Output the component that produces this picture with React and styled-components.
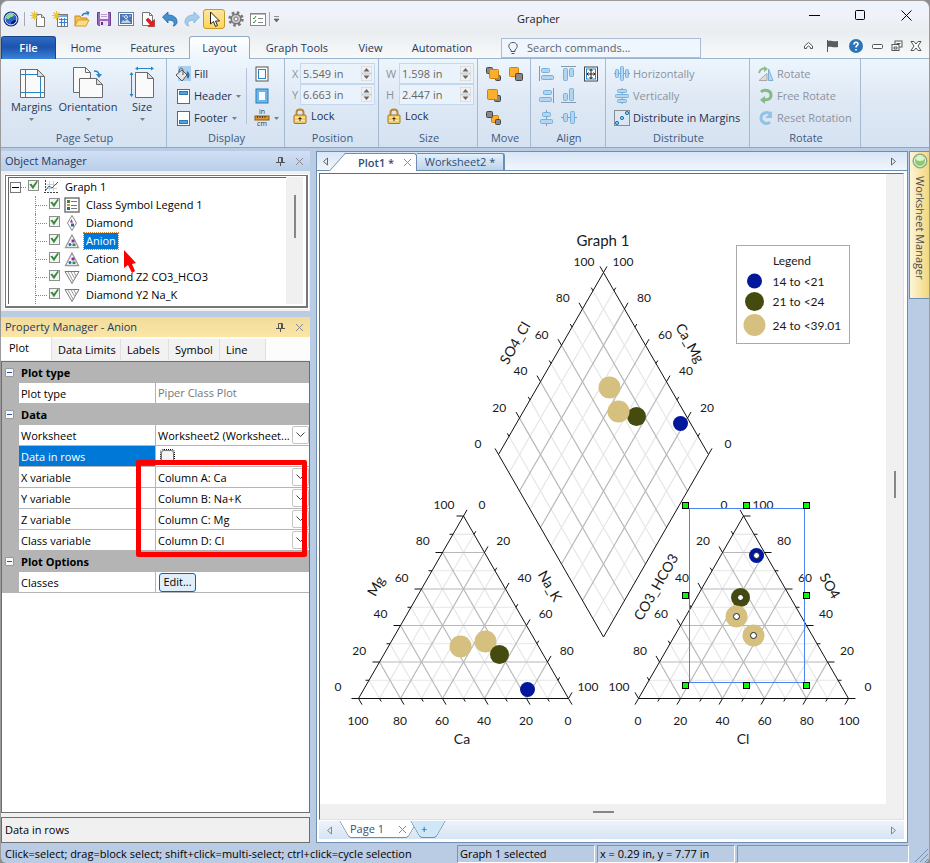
import React from "react";
import styled, { createGlobalStyle, css } from "styled-components";

const GlobalStyle = createGlobalStyle`
  *, *::before, *::after { box-sizing: border-box; }
  body { margin: 0; background: #8b8b8b; font: 11px/16px "Open Sans", "Noto Sans", sans-serif; color: #000; }
  button, input, select { font: inherit; color: inherit; margin: 0; padding: 0; border: 0; background: none; }
  svg { display: block; flex: none; }
`;

/* ---------- window frame ---------- */
const Window = styled.div`
  height: 100vh;
  min-height: 700px;
  min-width: 900px;
  display: flex;
  flex-direction: column;
  background: #bacce4;
  border: 1px solid #9b9b9b;
  border-bottom: 0;
  border-radius: 8px 8px 6px 6px;
  overflow: hidden;
`;
const Header = styled.header`
  background: linear-gradient(#eff3fb 0, #eef1f8 18px, #e9edf0 30px, #f8f9f9 57px);
`;
const TitleBar = styled.div`
  height: 35px;
  display: grid;
  grid-template-columns: auto 1fr auto;
  align-items: center;
`;
const QuickBar = styled.div`
  display: flex;
  align-items: center;
  padding: 0 6px 0 2px;
`;
const QuickButton = styled.button`
  width: 22px;
  height: 20px;
  display: grid;
  place-items: center;
  border-radius: 3px;
  border: 1px solid ${(p) => (p.$on ? "#c29b29" : "transparent")};
  background: ${(p) => (p.$on ? "linear-gradient(#fde5a0, #ffd559)" : "none")};
`;
const QuickRule = styled.span`
  width: 1px;
  height: 14px;
  margin: 0 ${(p) => p.$after}px 0 ${(p) => p.$before}px;
  background: #a5abb5;
`;
const AppTitle = styled.h1`
  margin: 0;
  font-size: 11px;
  font-weight: 400;
  text-align: center;
  color: #222;
`;
const WindowButtons = styled.div`
  display: flex;
  justify-content: flex-end;
  align-self: start;
`;
const WindowButton = styled.button`
  width: 46px;
  height: 28px;
  display: grid;
  place-items: center;
`;

/* ---------- ribbon tabs ---------- */
const TabRow = styled.nav`
  height: 23px;
  display: flex;
  align-items: stretch;
  border-bottom: 1px solid #9db4ce;
`;
const RibbonTab = styled.button`
  width: ${(p) => p.$w}px;
  height: 23px;
  color: #1e395b;
  border-radius: 3px 3px 0 0;
  border: 1px solid transparent;
  border-bottom: 0;
  ${(p) => p.$active && css`
    background: linear-gradient(#fff, #edf5fd);
    border-color: #8fa9c8;
  `}
  ${(p) => p.$file && css`
    color: #fff;
    font-weight: 600;
    border-color: #16448f;
    background: linear-gradient(#2d6cc4, #1d53ac 45%, #3b84da);
  `}
`;
const SearchBox = styled.label`
  width: 200px;
  height: 20px;
  margin: 2px 0 0 14px;
  display: flex;
  align-items: center;
  gap: 8px;
  padding-left: 5px;
  background: #eff6fd;
  border: 1px solid #a9bdd8;
  input { flex: 1; min-width: 0; outline: 0; }
  input::placeholder { color: #5d6470; opacity: 1; }
`;
const MdiButtons = styled.div`
  margin-left: auto;
  display: flex;
  align-items: center;
  padding: 0 3px 3px 0;
`;
const MdiButton = styled.button`
  width: ${(p) => p.$w || 20}px;
  height: 18px;
  display: grid;
  place-items: center;
`;

/* ---------- ribbon ---------- */
const Ribbon = styled.div`
  height: 89px;
  display: flex;
  background: linear-gradient(#edf5fd, #dfe9f5 45%, #d5e2f1);
  border-bottom: 1px solid #8fa6c3;
`;
const Group = styled.section`
  width: ${(p) => p.$w}px;
  flex: none;
  display: flex;
  flex-direction: column;
  justify-content: space-between;
  border-right: 1px solid #a6b9d2;
`;
const GroupBody = styled.div`
  height: 66px;
  margin-top: 4px;
  display: flex;
  padding-left: ${(p) => p.$pad || 0}px;
`;
const GroupTitle = styled.h2`
  margin: 0;
  height: 17px;
  padding-left: 2px;
  font-size: 11px;
  font-weight: 400;
  line-height: 16px;
  text-align: center;
  color: #3e5a80;
`;
const BigButton = styled.button`
  width: ${(p) => p.$w}px;
  padding-top: 3px;
  display: flex;
  flex-direction: column;
  align-items: center;
  justify-content: flex-start;
  color: #1e395b;
  span { margin: 1px 0 2px; }
`;
const Stack = styled.div`
  width: ${(p) => (p.$w ? p.$w + "px" : "auto")};
  display: flex;
  flex-direction: column;
`;
const SmallButton = styled.button`
  height: 22px;
  display: flex;
  align-items: center;
  gap: 3px;
  white-space: nowrap;
  color: ${(p) => (p.disabled ? "#8a929e" : "#1e2f50")};
`;
const IconGrid = styled.div`
  display: grid;
  grid-template-columns: repeat(${(p) => p.$cols}, 22px);
  grid-auto-rows: 22px;
`;
const IconButton = styled.button`
  display: grid;
  place-items: center;
`;
const VRule = styled.span`
  width: 1px;
  height: 56px;
  margin: 5px 7px 0 0;
  background: #b4c3d8;
`;
const SpinRow = styled.label`
  height: 21px;
  display: flex;
  align-items: center;
  color: #8a929e;
  > span { width: ${(p) => p.$lw}px; text-align: left; }
`;
const SpinField = styled.div`
  width: 75px;
  height: 21px;
  display: flex;
  align-items: center;
  padding: 0 2px;
  border: 1px solid #c4d7ec;
  background: #eaf3fc;
  input { width: 58px; color: #666; }
`;

/* ---------- workspace ---------- */
const Workspace = styled.main`
  flex: 1;
  min-height: 0;
  display: flex;
  padding-top: 3px;
`;
const Dock = styled.aside`
  width: 309px;
  flex: none;
  display: flex;
  flex-direction: column;
`;
const PaneTitle = styled.div`
  height: 20px;
  flex: none;
  display: flex;
  align-items: center;
  padding: 0 1px 0 4px;
  color: #1e395b;
  background: ${(p) => (p.$gold ? "linear-gradient(#f2dc9c, #fce6a4)" : "linear-gradient(#d0dff5, #b9cee9)")};
  h2 { margin: 0 auto 0 0; font-size: 11px; font-weight: 400; }
`;
const PaneButton = styled.button`
  width: 19px;
  height: 18px;
  display: grid;
  place-items: center;
`;
const TreePane = styled.div`
  height: 140px;
  flex: none;
  padding: 4px 2px 3px 4px;
  margin-bottom: 6px;
  background: #f0f0f0;
`;
const TreeBox = styled.div`
  position: relative;
  height: 133px;
  display: flex;
  border: 1px solid #777;
  border-width: 1px 2px 2px 1px;
  outline: 1px solid #fff;
  background: #fff;
  padding: 1px 3px 2px 2px;
`;
const TreeList = styled.ul`
  flex: 1;
  margin: 0;
  padding: 0;
  list-style: none;
  overflow: hidden;
  border-top: 1px solid #666;
  border-left: 1px solid #666;
`;
const TreeItem = styled.li`
  height: 18px;
  display: flex;
  align-items: center;
  padding-left: ${(p) => (p.$child ? 26 : 1)}px;
`;
const Elbow = styled.span`
  width: ${(p) => (p.$root ? 5 : 12)}px;
  height: 18px;
  border-left: ${(p) => (p.$root ? 0 : 1)}px dotted #888;
  background: linear-gradient(90deg, #888 1px, transparent 1px) 0 9px / 2px 1px repeat-x;
  margin-right: 2px;
`;
const Expander = styled.button`
  width: 11px;
  height: 11px;
  display: grid;
  place-items: center;
  border: 1px solid #777;
  &::after { content: ""; width: 7px; height: 1px; background: #000; }
`;
const Tick = styled.input.attrs({ type: "checkbox" })`
  appearance: none;
  width: 11px;
  height: 11px;
  flex: none;
  margin-bottom: 4px;
  border: 1px solid #8e8f8f;
  background: #f4f4f4;
  &:checked::after {
    content: "";
    display: block;
    width: 9px;
    height: 9px;
    background: #3a8a3a;
    clip-path: polygon(4% 42%, 28% 36%, 42% 58%, 85% 2%, 98% 14%, 44% 98%);
  }
`;
const TreeLabel = styled.label`
  display: flex;
  align-items: center;
  gap: 4px;
  white-space: nowrap;
  margin-left: 4px;
  span { padding: 0 2px; line-height: 16px; }
  ${(p) => p.$selected && css`
    span { background: #0078d7; color: #fff; outline: 1px dotted #d08030; }
  `}
`;
const ScrollTrack = styled.div`
  width: ${(p) => (p.$row ? "auto" : "17px")};
  height: ${(p) => (p.$row ? "15px" : "auto")};
  display: flex;
  justify-content: center;
  align-items: ${(p) => (p.$row ? "center" : "flex-start")};
  background: #f0f0f0;
`;
const ScrollThumb = styled.span`
  width: ${(p) => (p.$row ? 21 : 2)}px;
  height: ${(p) => (p.$row ? 2 : p.$len)}px;
  margin-top: ${(p) => p.$top || 0}px;
  background: #868686;
`;
const Pointer = styled.svg`
  position: absolute;
  left: 118px;
  top: 74px;
`;

const PropPane = styled.section`
  flex: 1;
  min-height: 0;
  display: flex;
  flex-direction: column;
  background: #f0f0f0;
`;
const PropTabs = styled.div`
  height: 23px;
  flex: none;
  display: flex;
  background: #fcfcfc;
`;
const PropTab = styled.button`
  width: ${(p) => p.$w}px;
  height: ${(p) => (p.$active ? 23 : 21)}px;
  margin-top: ${(p) => (p.$active ? 0 : 2)}px;
  padding-bottom: ${(p) => (p.$active ? 2 : 0)}px;
  padding-left: ${(p) => (p.$active ? 8 : 6)}px;
  text-align: left;
  background: ${(p) => (p.$active ? "#fff" : "#f2f2f2")};
  border-right: 1px solid #e0e0e0;
`;
const PropGrid = styled.div`
  flex: 1;
  min-height: 0;
  background: #fff;
  border: 1px solid #6e6e6e;
  margin-top: 1px;
`;
const Section = styled.div`
  padding-left: 17px;
  background: #b4b4b4;
`;
const SectionTitle = styled.h3`
  height: 21px;
  margin: 0 0 0 -14px;
  display: flex;
  align-items: center;
  gap: 7px;
  font-size: 11px;
  font-weight: 700;
`;
const Collapse = styled.button`
  width: 9px;
  height: 9px;
  display: grid;
  place-items: center;
  background: #f6f8fc;
  border: 1px solid #92999f;
  border-radius: 1px;
  &::after { content: ""; width: 5px; height: 1px; background: #3050a0; }
`;
const PropRow = styled.div`
  height: 21px;
  display: grid;
  grid-template-columns: 136px 1fr;
  gap: 1px;
  border-bottom: 1px solid #b4b4b4;
`;
const PropName = styled.label`
  padding: 1px 0 0 2px;
  line-height: 19px;
  background: ${(p) => (p.$selected ? "#0078d7" : "#fff")};
  color: ${(p) => (p.$selected ? "#fff" : "#000")};
`;
const PropValue = styled.div`
  min-width: 0;
  display: flex;
  align-items: center;
  padding-left: 2px;
  background: #fff;
  position: relative;
  input[type="text"] { width: 100%; color: #777; }
`;
const Select = styled.select`
  appearance: none;
  width: 100%;
  height: 20px;
  padding: 1px 12px 0 0;
  outline: 0;
  white-space: nowrap;
`;
const Chevron = styled.span`
  position: absolute;
  right: 0;
  top: 1px;
  width: 17px;
  height: 18px;
  display: grid;
  place-items: center;
  background: #fff;
  border: 1px solid #c4c4c4;
  border-radius: 2px;
  pointer-events: none;
`;
const RowTick = styled.input.attrs({ type: "checkbox" })`
  appearance: none;
  width: 13px;
  height: 13px;
  margin: 4px 0 0 3px;
  align-self: flex-start;
  border: 1px solid #777;
  border-radius: 3px;
  background: #f4f4f4;
  outline: 1px dotted #000;
`;
const EditButton = styled.button`
  width: 37px;
  height: 19px;
  margin-left: 1px;
  line-height: 16px;
  border: 1px solid #0067c0;
  border-radius: 3px;
  background: #e0eef9;
`;
const VariableRows = styled.div`
  position: relative;
  z-index: 1;
`;
const Highlight = styled.span`
  position: absolute;
  left: 117px;
  right: 2px;
  top: -7px;
  bottom: -6px;
  border: 5px solid #fe0000;
  border-radius: 2px;
  pointer-events: none;
`;
const Description = styled.div`
  height: 26px;
  flex: none;
  margin-top: 4px;
  padding: 1px 0 0 3px;
  line-height: 22px;
  font-weight: 500;
  border: 1px solid #6e6e6e;
  background: #f0f0f0;
`;

/* ---------- document area ---------- */
const Document = styled.section`
  flex: 1;
  min-width: 0;
  display: flex;
  flex-direction: column;
  margin: 0 1px 0 6px;
  border: 1px solid #6d8eb0;
  background: #fff;
`;
const DocTabs = styled.div`
  height: 19px;
  flex: none;
  display: flex;
  align-items: flex-end;
  padding-right: 6px;
  background: linear-gradient(#d9e6f5, #f0f6fd);
  border-bottom: 1px solid #6d8eb0;
`;
const ArrowButton = styled.button`
  width: 16px;
  height: 18px;
  display: grid;
  place-items: center;
  ${(p) => p.$end && "margin-left: auto;"}
`;
const DocTab = styled.button`
  position: relative;
  z-index: ${(p) => (p.$active ? 1 : 0)};
  height: ${(p) => (p.$active ? 18 : 17)}px;
  width: ${(p) => p.$w}px;
  margin: 0 0 ${(p) => (p.$active ? -1 : 0)}px ${(p) => p.$gap}px;
  padding: 0 4px 0 ${(p) => (p.$active ? 12 : 4)}px;
  display: flex;
  align-items: center;
  justify-content: ${(p) => (p.$active ? "space-between" : "center")};
  font-weight: ${(p) => (p.$active ? 600 : 500)};
  color: #2f4d75;
  border: 1px solid #6d8eb0;
  border-width: 1px ${(p) => (p.$active ? 1 : 2)}px 0 0;
  border-radius: 0 3px 0 0;
  background: ${(p) => (p.$active ? "#fff" : "linear-gradient(#e4f0fb, #bdd3ea)")};
  ${(p) => p.$active && css`
    &::before {
      content: "";
      position: absolute;
      z-index: -1;
      left: -9px;
      top: -1px;
      width: 18px;
      height: 18px;
      border: 1px solid #6d8eb0;
      border-width: 1px 0 0 1px;
      background: #fff;
      transform: skewX(-42deg);
    }
  `}
`;
const CanvasFrame = styled.div`
  flex: 1;
  min-height: 0;
  margin: 2px 3px 0 2px;
  border: 1px solid #e0e0e0;
  border-top: 1px solid #6a6a6a;
  border-left: 1px solid #6a6a6a;
  display: grid;
  grid-template-columns: 1fr 17px;
  grid-template-rows: 1fr 15px;
  background: #f0f0f0;
`;
const Canvas = styled.div`
  overflow: hidden;
  background: #fff;
`;
const PageTabs = styled.div`
  height: 18px;
  flex: none;
  display: flex;
  margin: 1px 3px 3px 2px;
  padding: 0 3px 0 2px;
  background: linear-gradient(#ecf3fb, #d7e4f2);
`;
const PageTab = styled.button`
  position: relative;
  z-index: 0;
  width: ${(p) => p.$w}px;
  height: 17px;
  margin-left: ${(p) => p.$gap}px;
  display: flex;
  align-items: center;
  justify-content: space-between;
  line-height: 14px;
  color: #35507a;
  border-bottom: 1px solid #6d8eb0;
  background: ${(p) => p.$fill};
  &::before, &::after {
    content: "";
    position: absolute;
    z-index: -1;
    top: 0;
    width: 12px;
    height: 17px;
    background: ${(p) => p.$fill};
    border-bottom: 1px solid #6d8eb0;
  }
  &::before { left: -6px; transform: skewX(30deg); border-left: 1px solid #6d8eb0; border-radius: 0 0 0 3px; }
  &::after { right: -6px; transform: skewX(-30deg); border-right: 1px solid #6d8eb0; border-radius: 0 0 3px 0; }
`;
const SideStrip = styled.aside`
  width: 20px;
  flex: none;
`;
const SideTab = styled.button`
  width: 20px;
  height: 148px;
  padding-top: 1px;
  display: flex;
  flex-direction: column;
  align-items: center;
  gap: 7px;
  border: 1px solid #6d8eb0;
  border-right: 0;
  background: linear-gradient(90deg, #fdf5d8, #f3d77e);
  color: #4d4d4d;
  span { writing-mode: vertical-rl; line-height: 14px; white-space: nowrap; }
`;

/* ---------- status bar ---------- */
const StatusBar = styled.footer`
  height: 20px;
  flex: none;
  display: flex;
  gap: 2px;
  padding: 2px 0 0 4px;
`;
const StatusText = styled.span`
  width: 450px;
  line-height: 17px;
`;
const StatusCell = styled.span`
  ${(p) => (p.$w ? `width: ${p.$w}px;` : "flex: 1;")}
  padding-left: 2px;
  line-height: 15px;
  border: 1px solid;
  border-color: #7695b6 #fff #fff #7695b6;
`;

/* ---------- small drawings ---------- */
const Ico = ({ size = 16, children, ...rest }) => (
  <svg width={size} height={size} viewBox={`0 0 ${size} ${size}`} fill="none" aria-hidden="true" {...rest}>
    {children}
  </svg>
);
const Caret = () => (
  <svg width="7" height="5" viewBox="0 0 7 5" aria-hidden="true"><path d="M1 1h5L3.500 4z" fill="#7a7f88" /></svg>
);
const Close = ({ c = "#8a8a8a" }) => (
  <Ico size={9}><path d="M1 1l7 7M8 1L1 8" stroke={c} /></Ico>
);
const Sun = () => (
  <path d="M4.500 0v9M0 4.500h9M1.500 1.500l6 6M7.500 1.500l-6 6" stroke="#f0c419" strokeWidth="1.200" />
);
const Globe = () => (
  <Ico>
    <circle cx="8" cy="8" r="7.500" fill="#0c1c80" /><circle cx="8" cy="8" r="6" fill="#2c62cc" stroke="#dce9ff" />
    <path d="M3 6c2-4 6-4 8-2-1 3-4 1-5 4-2 0-3 0-3-2z" fill="#8ee08a" /><path d="M8 13c0-3 3-4 5-4-1 3-3 4-5 4z" fill="#0a1560" />
  </Ico>
);
const NewDoc = () => (
  <Ico><path d="M6.500 3.500h5l3 3v9h-8z" fill="#fdfdfd" stroke="#777" /><path d="M11.500 3.500v3h3" stroke="#777" fill="#ddd" /><Sun /></Ico>
);
const NewSheet = () => (
  <Ico>
    <rect x="5.500" y="3.500" width="10" height="12" fill="#fff" stroke="#777" /><path d="M6 5h9" stroke="#78a9dd" strokeWidth="2" />
    <path d="M7 8.500h8M7 11.500h8M9.500 7v8M12.500 7v8" stroke="#3b83cc" strokeWidth="1.200" /><Sun />
  </Ico>
);
const OpenIcon = () => (
  <Ico>
    <path d="M1 15V5h5l1 2h6v3" fill="#f3c050" stroke="#c98a1c" /><path d="M1 15l3-6h11l-3 6z" fill="#ffdd84" stroke="#d59a2a" />
    <path d="M8 5c1-3 4-3 5-2" stroke="#2c7fc0" strokeWidth="1.500" /><path d="M12 0l3.500 1-1.500 4z" fill="#2c7fc0" />
  </Ico>
);
const SaveIcon = () => (
  <Ico>
    <path d="M1.500 1.500h13v13h-12l-1-1z" fill="#9a68c0" stroke="#6c3d95" /><rect x="4" y="1" width="8" height="7" fill="#f3eef8" />
    <path d="M5 3.500h6M5 5.500h6" stroke="#b8a0cc" /><rect x="4" y="10" width="8" height="5" fill="#e8e0f0" /><rect x="5" y="11" width="2" height="3" fill="#61318a" />
  </Ico>
);
const PictureIcon = () => (
  <Ico>
    <rect x=".5" y="1.500" width="15" height="13" fill="#fff" stroke="#6c7f9c" /><rect x="2" y="3" width="12" height="10" fill="#4a76b4" />
    <path d="M3 12l2-3 2 1 2-2 4 4z" fill="#b9d3ee" /><circle cx="8" cy="6" r="1.500" stroke="#d7e7f8" /><path d="M4 5h2M11 5h2" stroke="#b9d3ee" />
  </Ico>
);
const ExportIcon = () => (
  <Ico>
    <path d="M2.500 1.500h7l3 3v10h-10z" fill="#fdfdfd" stroke="#777" /><path d="M9.500 1.500v3h3" stroke="#777" />
    <path d="M8 7l4 4 2.500-2.500v7H8l2-2L6 9z" fill="#e02020" stroke="#a81010" strokeWidth=".6" />
  </Ico>
);
const ArrowBack = ({ flip, light }) => (
  <Ico>
    <path transform={flip ? "matrix(-1 0 0 1 16 0)" : undefined} d="M.5 6L6 1v3c6 0 9 3 9 7 0 2-2 4-4 4 2-2 2-6-5-6v3z"
      fill={light ? "#a8cdea" : "#4590cf"} stroke={light ? "#7fb0d8" : "#20659f"} strokeWidth=".8" />
  </Ico>
);
const CursorIcon = () => (
  <Ico><path d="M4.500 1v12l3-2.500 2 5 2-1-2-4.500h4z" fill="#fff" stroke="#222" /></Ico>
);
const GearIcon = () => (
  <Ico>
    <circle cx="8" cy="8" r="6.300" stroke="#777" strokeWidth="2.800" strokeDasharray="2.500 2.450" />
    <circle cx="8" cy="8" r="4.800" fill="#ccc" stroke="#777" strokeWidth="1.500" /><circle cx="8" cy="8" r="2" fill="#f2f2f2" stroke="#777" />
  </Ico>
);
const ListIcon = () => (
  <Ico>
    <rect x=".5" y="2.500" width="15" height="12" fill="#fff" stroke="#888" /><path d="M1 3.500h14" stroke="#bbb" />
    <path d="M3 7l1 1 2-3M3 11l1 1 2-3" stroke="#2c8f3c" /><path d="M8 7.500h5M8 11.500h5" stroke="#888" />
  </Ico>
);
const MarginsIcon = () => (
  <Ico size={32}>
    <path d="M4.500 3.500h17l7 7v21h-24z" fill="#fafafa" stroke="#6b6b6b" /><path d="M21.500 3.500v7h7z" fill="#ddd" stroke="#6b6b6b" />
    <path d="M9.500 4v27M5 8.500h16M24.500 11v20M5 26.500h23" stroke="#2a85c4" />
  </Ico>
);
const OrientationIcon = () => (
  <Ico size={32}>
    <path d="M1.500 1.500h12l5 5v20h-17z" fill="#fafafa" stroke="#6b6b6b" /><path d="M13.500 1.500v5h5" stroke="#6b6b6b" />
    <path d="M7.500 12.500h17l6 6v13h-23z" fill="#fafafa" stroke="#6b6b6b" /><path d="M24.500 12.500v6h6z" fill="#ddd" stroke="#6b6b6b" />
    <path d="M22 5c3 0 5 1 5 4" stroke="#2a85c4" strokeWidth="1.500" /><path d="M24 8h6l-3 4z" fill="#2a85c4" />
  </Ico>
);
const SizeIcon = () => (
  <Ico size={32}>
    <path d="M9.500 6.500h12l6 6v19h-18z" fill="#fafafa" stroke="#6b6b6b" /><path d="M21.500 6.500v6h6z" fill="#ddd" stroke="#6b6b6b" />
    <path d="M10 2.500h17M5.500 7v23" stroke="#2a85c4" />
    <path d="M12 .5L9 2.500l3 2zM25 .5l3 2-3 2zM3.500 9l2-3 2 3zM3.500 28l2 3 2-3z" fill="#2a85c4" />
  </Ico>
);
const FillIcon = () => (
  <Ico>
    <rect x="3" y="0" width="13" height="15" fill="#abcfee" /><path d="M12 5c3 2 3 5 1 8-1-2-2-4-1-8z" fill="#1f6fb4" />
    <path d="M1 9l6-5 5 5-5 6z" fill="#e6e6e6" stroke="#555" /><path d="M4 6c0-5 4-5 4-1v4" stroke="#555" />
  </Ico>
);
const BandIcon = ({ y }) => (
  <Ico>
    <rect x="2.500" y="1.500" width="12" height="14" fill="#fff" stroke="#666" /><rect x="4.500" y={y} width="8" height="3" fill="#4ba3e3" stroke="#2a7ab8" />
  </Ico>
);
const FrameIcon = ({ fill, inner }) => (
  <Ico>
    <rect x="2" y="1" width="12" height="14" fill={fill} stroke={inner ? "#555" : "#2878b8"} /><rect x="4.500" y="3.500" width="7" height="9" fill="#f7fbff" stroke={inner || "#6db4ea"} />
  </Ico>
);
const UnitsIcon = () => (
  <svg width="16" height="22" viewBox="0 0 16 22" aria-hidden="true">
    <rect x="1" y="9" width="14" height="4" fill="#d7973a" stroke="#8c5a14" /><path d="M3.500 9v2M6 9v2M8.500 9v2M11 9v2" stroke="#5d3a08" />
    <text x="8" y="7" fontSize="7" textAnchor="middle" fill="#333">in</text><text x="8" y="19" fontSize="7" textAnchor="middle" fill="#333">cm</text>
  </svg>
);
const LockIcon = () => (
  <Ico>
    <path d="M4.500 8V4.500c0-4 7-4 7 0V8" stroke="#b98a35" strokeWidth="2" /><rect x="2" y="7" width="12" height="8.500" rx="1" fill="#f2cc66" stroke="#a87520" />
    <path d="M3 9.500h10M3 12.500h10" stroke="#ffe9ad" /><path d="M8 9v4M6.500 10.500h3" stroke="#3b2a08" />
  </Ico>
);
const SpinIcon = () => (
  <svg width="11" height="15" viewBox="0 0 11 15" aria-hidden="true">
    <rect width="11" height="7" fill="#f1f1f1" stroke="#ccc" /><rect y="8" width="11" height="7" fill="#f1f1f1" stroke="#ccc" />
    <path d="M2.500 5.500h6L5.500 2zM2.500 9.500h6L5.500 13z" fill="#666" />
  </svg>
);
const MoveIcon = ({ boxes }) => (
  <Ico>
    {boxes.map(([x, y, s, gold]) => (
      <rect key={`${x}-${y}`} x={x} y={y} width={s} height={s} rx="1" fill={gold ? "#fcae2c" : "#888"} stroke={gold ? "#d07f0c" : "#444"} />
    ))}
  </Ico>
);
const MOVES = [
  [[0.5, 1.5, 6], [9.5, 9.5, 5], [3.5, 3.5, 9, 1]],
  [[1.5, 1.5, 9, 1], [7.5, 7.5, 7]],
  [[8.5, 7.5, 6], [1.5, 1.5, 10, 1]],
  [[5.5, 5.5, 7, 1], [0.5, 1.5, 6], [9.5, 9.5, 5]],
];
const BarsIcon = ({ line, bars }) => (
  <Ico>
    <path d={line} stroke="#8796a8" />
    {bars.map((b) => <rect key={b.join()} x={b[0]} y={b[1]} width={b[2]} height={b[3]} rx="1" fill="#b0d6f3" stroke="#78b0dc" />)}
  </Ico>
);
const ALIGNS = [
  { line: "M.5 0v15", bars: [[2.5, 2.5, 8, 4], [2.5, 9.5, 12, 4]] },
  { line: "M0 .5h15", bars: [[2.5, 2.5, 4, 12], [8.5, 2.5, 4, 8]] },
  null,
  { line: "M14.5 0v15", bars: [[4.5, 2.5, 8, 4], [0.5, 9.5, 12, 4]] },
  { line: "M0 14.5h15", bars: [[2.5, 5.5, 4, 7], [8.5, 0.5, 4, 12]] },
  undefined,
  { line: "M7.5 0v16", bars: [[3.5, 2.5, 8, 4], [1.5, 9.5, 12, 4]] },
  { line: "M0 7.5h16", bars: [[2.5, 3.5, 4, 8], [9.5, 1.5, 4, 12]] },
];
const CenterIcon = () => (
  <Ico>
    <rect x="1.500" y="1" width="13" height="14" fill="#fff" stroke="#444" /><rect x="3.500" y="3" width="9" height="10" stroke="#2a85c4" />
    <path d="M8 3v10M4 8h8" stroke="#222" /><path d="M6.500 5L8 3.500 9.500 5M6.500 11L8 12.500 9.500 11M5.500 6.500L4 8l1.500 1.500M10.500 6.500L12 8l-1.500 1.500" stroke="#222" />
  </Ico>
);
const MarginDistIcon = () => (
  <Ico>
    <rect x=".5" y=".5" width="15" height="15" stroke="#333" strokeDasharray="1 1" />
    <circle cx="3" cy="13" r="1.600" fill="#8fd0f5" stroke="#1c6fae" /><circle cx="8" cy="8" r="1.600" fill="#8fd0f5" stroke="#1c6fae" /><circle cx="13" cy="3" r="1.600" fill="#8fd0f5" stroke="#1c6fae" />
  </Ico>
);
const RotateIcon = () => (
  <Ico>
    <path d="M1 14.500h8v-7z" fill="#ddd" stroke="#a8a8a8" /><path d="M10.500 3v11.500H15z" fill="#b7d8f0" stroke="#7fb0d8" />
    <path d="M1 7c1-4 4-5 6-4" stroke="#8abf8d" strokeWidth="2" /><path d="M6 0l4 3-4 3z" fill="#8abf8d" />
  </Ico>
);
const FreeRotateIcon = () => (
  <Ico><path d="M3 4c3-3 10-2 10 3s-4 5-7 5" stroke="#86b98a" strokeWidth="3" /><path d="M7 8v8l-5-4z" fill="#86b98a" /></Ico>
);
const ResetIcon = () => (
  <Ico><path d="M13 4C9 1 3 3 3 8s6 7 9 4" stroke="#93c4e8" strokeWidth="3" /><path d="M14 1v7H7z" fill="#93c4e8" /></Ico>
);
const BulbIcon = () => (
  <Ico size={12}><path d="M4 8C0 4.500 2 .5 6 .5S12 4.500 8 8v1.500H4zM4.500 11.500h3" stroke="#555" /></Ico>
);
const PinIcon = () => (
  <Ico size={9}><path d="M2.500.5h4v5h-4zM0 5.500h9M4.500 6v3M5.500 1v4" stroke="#555" /></Ico>
);
const GraphTreeIcon = () => (
  <Ico><path d="M2.500 1v13M1 13.500h14" stroke="#444" strokeDasharray="2 1" /><path d="M6.500 2v10M10.500 2v10M4 5.500h10M4 9.500h10" stroke="#d0d0d0" /><path d="M3 11l3-4 3 2 6-6" stroke="#1d6ca8" /></Ico>
);
const LegendTreeIcon = () => (
  <Ico>
    <rect x="1" y="1" width="14" height="14" fill="#fff" stroke="#777" strokeWidth="1.500" /><path d="M7 4.500h6M7 8.500h6M7 11.500h6" stroke="#777" />
    <rect x="3" y="3" width="3" height="3" fill="#2c8f3c" /><rect x="3" y="7" width="3" height="2" fill="#f28a1c" /><rect x="3" y="10" width="3" height="3" fill="#1d6ca8" />
  </Ico>
);
const DiamondTreeIcon = () => (
  <Ico><path d="M8 .5L12.500 8 8 15.500 3.500 8z" fill="#fff" stroke="#888" /><path d="M6 7.500L7.500 4 9 7.500z" fill="#8c2fa0" /><rect x="7" y="8.500" width="3" height="3" fill="#1d6ca8" /></Ico>
);
const TriTreeIcon = () => (
  <Ico><path d="M8 2l6.500 12.500h-13z" fill="#fff" stroke="#999" strokeWidth="1.300" /><rect x="7.500" y="6.500" width="3" height="3" fill="#8c2fa0" /><circle cx="6" cy="11.500" r="1.500" fill="#1d6ca8" /><rect x="8.500" y="10.500" width="3" height="2.500" fill="#2c8f3c" /></Ico>
);
const DownTreeIcon = () => (
  <Ico><path d="M1 2.500h14L8 14.500z" fill="#fff" stroke="#777" /><path d="M4 3l5 9M7 3l3.500 6M10 3l2 4" stroke="#999" /></Ico>
);

/* ---------- Piper chart ---------- */
const ChartSvg = styled.svg`
  font-family: Lato, "Open Sans", sans-serif;
  font-size: 12px;
  fill: #1a1a1a;
  .title { font-size: 15px; }
  .axis { font-size: 14px; }
`;
const mix = (a, b, t) => [a[0] + (b[0] - a[0]) * t, a[1] + (b[1] - a[1]) * t];
const INK = "#111";
const CLASS = {
  low: { r: 7.5, fill: "#02189c" },
  mid: { r: 9.5, fill: "#454b0e" },
  high: { r: 11, fill: "#d6c080" },
};
const DIAMOND = { t: [603.5, 272.5], l: [498.5, 454.5], r: [708.5, 454.5], b: [603.5, 637] };
const CATION = { t: [463.5, 516], l: [358.5, 698.5], r: [568.5, 698.5] };
const ANION = { t: [743.5, 516], l: [638.5, 698.5], r: [848.5, 698.5] };
const UP_LEFT = [-0.5, -0.87];
const UP_RIGHT = [0.5, -0.87];
const DOWN_LEFT = [-0.5, 0.87];
const DOWN_RIGHT = [0.5, 0.87];

function Grid({ pairs }) {
  const steps = [1, 3, 5, 7, 9, 2, 4, 6, 8];
  return steps.map((s) =>
    pairs.map(([a, b, c, d], i) => {
      const [x1, y1] = mix(a, b, s / 10);
      const [x2, y2] = mix(c, d, s / 10);
      return <line key={`${s}-${i}`} x1={x1} y1={y1} x2={x2} y2={y2} stroke={s % 2 ? "#e6e6e6" : "#b8b8b8"} strokeWidth="1.2" />;
    })
  );
}
function Axis({ from, to, dir }) {
  return Array.from({ length: 11 }, (_, i) => {
    const [x, y] = mix(from, to, i / 10);
    const len = i % 2 ? 3.5 : 7;
    return <line key={i} x1={x} y1={y} x2={x + dir[0] * len} y2={y + dir[1] * len} stroke={INK} />;
  });
}
function Scale({ from, to, reverse }) {
  return [0, 20, 40, 60, 80, 100].map((v) => {
    const [x, y] = mix(from, to, v / 100);
    return <text key={v} x={x} y={y + 5} textAnchor="middle">{reverse ? 100 - v : v}</text>;
  });
}
const Dots = ({ items, marked }) =>
  items.map(([kind, x, y]) => (
    <g key={`${x}-${y}`}>
      <circle cx={x} cy={y} {...CLASS[kind]} />
      {marked && <circle cx={x} cy={y} r="3" fill="#fff" stroke="#222" />}
    </g>
  ));
const AxisName = ({ x, y, turn, children }) => (
  <text className="axis" textAnchor="middle" transform={`translate(${x} ${y}) rotate(${turn})`} y="5">{children}</text>
);
const triPairs = ({ t, l, r }) => [[l, t, r, t], [l, r, t, r], [r, l, t, l]];
const outline = (o) => (o.b ? [o.t, o.r, o.b, o.l] : [o.t, o.r, o.l]).map((p) => p.join()).join(" ");

function PiperChart() {
  const handles = [[685.5, 505.5], [746.5, 505.5], [806.5, 505.5], [685.5, 595.5], [806.5, 595.5], [685.5, 685.5], [746.5, 685.5], [806.5, 685.5]];
  const legend = [["low", 281, "14 to <21"], ["mid", 301.5, "21 to <24"], ["high", 325, "24 to <39.01"]];
  return (
    <ChartSvg width="566" height="631" viewBox="320 174 566 631" role="img" aria-label="Piper class plot">
      <text className="title" x="603" y="246" textAnchor="middle">Graph 1</text>

      <Grid pairs={[[DIAMOND.l, DIAMOND.t, DIAMOND.b, DIAMOND.r], [DIAMOND.t, DIAMOND.r, DIAMOND.l, DIAMOND.b]]} />
      <polygon points={outline(DIAMOND)} fill="none" stroke={INK} />
      <Axis from={DIAMOND.l} to={DIAMOND.t} dir={UP_LEFT} />
      <Axis from={DIAMOND.r} to={DIAMOND.t} dir={UP_RIGHT} />
      <Scale from={[478, 443]} to={[584, 261]} />
      <Scale from={[728, 443]} to={[623, 261]} />
      <AxisName x={515} y={343} turn={-60}>SO4_Cl</AxisName>
      <AxisName x={690} y={343} turn={60}>Ca_Mg</AxisName>
      <Dots items={[["high", 609.5, 387.5], ["mid", 636.5, 416.5], ["high", 618.5, 411.5], ["low", 680.5, 423.5]]} />

      <Grid pairs={triPairs(CATION)} />
      <polygon points={outline(CATION)} fill="none" stroke={INK} />
      <Axis from={CATION.l} to={CATION.t} dir={[-1, 0]} />
      <Axis from={CATION.r} to={CATION.t} dir={UP_RIGHT} />
      <Axis from={CATION.l} to={CATION.r} dir={DOWN_RIGHT} />
      <Scale from={[338, 686]} to={[444, 504]} />
      <Scale from={[482, 504]} to={[588, 686]} />
      <Scale from={[358, 720]} to={[568, 720]} reverse />
      <text className="axis" x="462" y="744" textAnchor="middle">Ca</text>
      <AxisName x={376} y={586} turn={-60}>Mg</AxisName>
      <AxisName x={550} y={586} turn={60}>Na_K</AxisName>
      <Dots items={[["high", 460.5, 646.5], ["high", 485.5, 641.5], ["mid", 499.5, 654.5], ["low", 527.5, 689.5]]} />

      <Grid pairs={triPairs(ANION)} />
      <polygon points={outline(ANION)} fill="none" stroke={INK} />
      <Axis from={ANION.l} to={ANION.t} dir={UP_LEFT} />
      <Axis from={ANION.r} to={ANION.t} dir={[1, 0]} />
      <Axis from={ANION.l} to={ANION.r} dir={DOWN_LEFT} />
      <Scale from={[724, 504]} to={[619, 686]} />
      <Scale from={[868, 686]} to={[763, 504]} />
      <Scale from={[638, 720]} to={[849, 720]} />
      <text className="axis" x="743" y="744" textAnchor="middle">Cl</text>
      <AxisName x={656} y={587} turn={-60}>CO3_HCO3</AxisName>
      <AxisName x={830} y={586} turn={60}>SO4</AxisName>
      <Dots marked items={[["low", 756.5, 555.5], ["mid", 740.5, 597.5], ["high", 736.5, 616.5], ["high", 753.5, 635.5]]} />

      <rect x="689.5" y="508.5" width="115" height="174" fill="none" stroke="#4a84f5" />
      {handles.map(([x, y]) => <rect key={`${x}-${y}`} x={x - 3} y={y - 3} width="6" height="6" fill="#0f0" stroke="#000" />)}

      <rect x="736.5" y="245.5" width="113" height="98" fill="#fff" stroke="#aaa" />
      <text x="792" y="265" textAnchor="middle">Legend</text>
      {legend.map(([kind, y, label]) => (
        <g key={kind}>
          <circle cx="754.5" cy={y} {...CLASS[kind]} />
          <text x="772.5" y={y + 4.5}>{label}</text>
        </g>
      ))}
    </ChartSvg>
  );
}

/* ---------- composed parts ---------- */
const Spin = ({ label, value, lw }) => (
  <SpinRow $lw={lw}>
    <span>{label}</span>
    <SpinField><input type="text" defaultValue={value} /><SpinIcon /></SpinField>
  </SpinRow>
);
const SelectRow = ({ id, name, value }) => (
  <PropRow>
    <PropName htmlFor={id}>{name}</PropName>
    <PropValue>
      <Select id={id} defaultValue={value}><option>{value}</option></Select>
      <Chevron><svg width="9" height="6" viewBox="0 0 9 6"><path d="M.5.5l4 4 4-4" fill="none" stroke="#444" /></svg></Chevron>
    </PropValue>
  </PropRow>
);
const TREE = [
  ["Class Symbol Legend 1", LegendTreeIcon],
  ["Diamond", DiamondTreeIcon],
  ["Anion", TriTreeIcon, true],
  ["Cation", TriTreeIcon],
  ["Diamond Z2 CO3_HCO3", DownTreeIcon],
  ["Diamond Y2 Na_K", DownTreeIcon],
];
const QUICK = [
  ["New plot", NewDoc], ["New worksheet", NewSheet], ["Open", OpenIcon], ["Save", SaveIcon], ["Picture", PictureIcon], ["Export", ExportIcon],
];
const VARIABLES = [
  ["x-var", "X variable", "Column A: Ca"],
  ["y-var", "Y variable", "Column B: Na+K"],
  ["z-var", "Z variable", "Column C: Mg"],
  ["class-var", "Class variable", "Column D: Cl"],
];

export default function App() {
  return (
    <>
      <GlobalStyle />
      <Window>
        <Header>
          <TitleBar>
            <QuickBar>
              <Globe />
              <QuickRule $before={5} $after={2} />
              {QUICK.map(([name, Icon]) => <QuickButton key={name} aria-label={name}><Icon /></QuickButton>)}
              <QuickButton aria-label="Undo"><ArrowBack /></QuickButton>
              <QuickButton aria-label="Redo"><ArrowBack flip light /></QuickButton>
              <QuickButton aria-label="Select" $on><CursorIcon /></QuickButton>
              <QuickButton aria-label="Settings"><GearIcon /></QuickButton>
              <QuickButton aria-label="Options"><ListIcon /></QuickButton>
              <QuickRule $before={0} $after={3} />
              <svg width="7" height="8" viewBox="0 0 7 8"><path d="M1 1.500h5M1 4h5L3.500 7z" fill="#666" stroke="#666" strokeWidth=".7" /></svg>
            </QuickBar>
            <AppTitle>Grapher</AppTitle>
            <WindowButtons>
              <WindowButton aria-label="Minimize"><Ico size={11}><path d="M0 5.500h11" stroke="#000" /></Ico></WindowButton>
              <WindowButton aria-label="Maximize"><Ico size={11}><rect x=".5" y=".5" width="9" height="9" rx="1" stroke="#000" /></Ico></WindowButton>
              <WindowButton aria-label="Close"><Ico size={11}><path d="M.5.5l10 10M10.500.5l-10 10" stroke="#000" /></Ico></WindowButton>
            </WindowButtons>
          </TitleBar>
          <TabRow>
            <RibbonTab $w={55} $file>File</RibbonTab>
            <RibbonTab $w={60}>Home</RibbonTab>
            <RibbonTab $w={73}>Features</RibbonTab>
            <RibbonTab $w={61} $active>Layout</RibbonTab>
            <RibbonTab $w={94}>Graph Tools</RibbonTab>
            <RibbonTab $w={53}>View</RibbonTab>
            <RibbonTab $w={90}>Automation</RibbonTab>
            <SearchBox><BulbIcon /><input type="text" placeholder="Search commands..." aria-label="Search commands" /></SearchBox>
            <MdiButtons>
              <MdiButton $w={24} aria-label="Collapse ribbon"><Ico size={9}><path d="M.5 5l4-3.500 4 3.500v2.500h-2v-1l-2-1.500-2 1.500v1h-2z" fill="#fff" stroke="#555" /></Ico></MdiButton>
              <MdiButton $w={24} aria-label="Flag"><Ico size={12}><path d="M1.500 0v12" stroke="#555" /><path d="M2 1c3-1 5 1 10 0v6c-5 1-7-1-10 0z" fill="#5c5c5c" /></Ico></MdiButton>
              <MdiButton $w={23} aria-label="Help"><Ico size={14}><circle cx="7" cy="7" r="7" fill="#2b74b8" /><path d="M5 5.500c0-3 4-3 4-.5C9 6.500 7 6.500 7 8.500M7 10v1.500" stroke="#fff" strokeWidth="1.600" /></Ico></MdiButton>
              <MdiButton aria-label="Minimize document"><Ico size={11}><rect x=".5" y="4.500" width="10" height="4" rx="1" fill="#fff" stroke="#555" /></Ico></MdiButton>
              <MdiButton $w={19} aria-label="Restore document"><Ico size={12}><rect x="4" y="1" width="7" height="6" fill="#fff" stroke="#555" /><path d="M5.500 3.500h4" stroke="#555" /><rect x="1" y="4.500" width="7" height="6" fill="#fff" stroke="#555" /><path d="M3 7h3v2H3z" stroke="#555" /></Ico></MdiButton>
              <MdiButton aria-label="Close document"><Ico size={12}><path d="M1 1.500h3l2 2.500 2-2.500h3L8 6l3 4.500H8L6 8l-2 2.500H1L4 6z" fill="#fff" stroke="#555" /></Ico></MdiButton>
            </MdiButtons>
          </TabRow>
        </Header>

        <Ribbon>
          <Group $w={166}>
            <GroupBody $pad={5}>
              <BigButton $w={51}><MarginsIcon /><span>Margins</span><Caret /></BigButton>
              <BigButton $w={62}><OrientationIcon /><span>Orientation</span><Caret /></BigButton>
              <BigButton $w={46}><SizeIcon /><span>Size</span><Caret /></BigButton>
            </GroupBody>
            <GroupTitle>Page Setup</GroupTitle>
          </Group>
          <Group $w={118}>
            <GroupBody $pad={8}>
              <Stack $w={71}>
                <SmallButton><FillIcon />Fill</SmallButton>
                <SmallButton><BandIcon y={3.5} />Header <Caret /></SmallButton>
                <SmallButton><BandIcon y={10.5} />Footer <Caret /></SmallButton>
              </Stack>
              <VRule />
              <Stack>
                <SmallButton aria-label="Show margins"><FrameIcon fill="#fff" inner="#2a85c4" /></SmallButton>
                <SmallButton aria-label="Show page"><FrameIcon fill="#6cb8ee" /></SmallButton>
                <SmallButton aria-label="Page units"><UnitsIcon /><Caret /></SmallButton>
              </Stack>
            </GroupBody>
            <GroupTitle>Display</GroupTitle>
          </Group>
          <Group $w={94}>
            <GroupBody $pad={7}>
              <Stack>
                <Spin label="X" value="5.549 in" lw={8} />
                <Spin label="Y" value="6.663 in" lw={8} />
                <SmallButton><LockIcon />Lock</SmallButton>
              </Stack>
            </GroupBody>
            <GroupTitle>Position</GroupTitle>
          </Group>
          <Group $w={99}>
            <GroupBody $pad={7}>
              <Stack>
                <Spin label="W" value="1.598 in" lw={13} />
                <Spin label="H" value="2.447 in" lw={13} />
                <SmallButton><LockIcon />Lock</SmallButton>
              </Stack>
            </GroupBody>
            <GroupTitle>Size</GroupTitle>
          </Group>
          <Group $w={53}>
            <GroupBody $pad={5}>
              <IconGrid $cols={2}>
                <IconButton aria-label="To front"><MoveIcon boxes={MOVES[0]} /></IconButton>
                <IconButton aria-label="Forward"><MoveIcon boxes={MOVES[1]} /></IconButton>
                <IconButton aria-label="Backward"><MoveIcon boxes={MOVES[2]} /></IconButton>
                <span />
                <IconButton aria-label="To back"><MoveIcon boxes={MOVES[3]} /></IconButton>
              </IconGrid>
            </GroupBody>
            <GroupTitle>Move</GroupTitle>
          </Group>
          <Group $w={75}>
            <GroupBody $pad={5}>
              <IconGrid $cols={3}>
                {ALIGNS.map((a, i) => {
                  if (a === undefined) return <span key={i} />;
                  return <IconButton key={i} aria-label="Align">{a ? <BarsIcon {...a} /> : <CenterIcon />}</IconButton>;
                })}
              </IconGrid>
            </GroupBody>
            <GroupTitle>Align</GroupTitle>
          </Group>
          <Group $w={144}>
            <GroupBody $pad={8}>
              <Stack>
                <SmallButton disabled><BarsIcon line="M0 7.500h16" bars={[[1.5, 3.5, 3, 8], [6.5, 0.5, 3, 14], [11.5, 3.5, 3, 8]]} />Horizontally</SmallButton>
                <SmallButton disabled><BarsIcon line="M8 0v16" bars={[[3.5, 1.5, 9, 3], [1.5, 6.5, 13, 3], [3.5, 11.5, 9, 3]]} />Vertically</SmallButton>
                <SmallButton><MarginDistIcon />Distribute in Margins</SmallButton>
              </Stack>
            </GroupBody>
            <GroupTitle>Distribute</GroupTitle>
          </Group>
          <Group $w={111}>
            <GroupBody $pad={8}>
              <Stack>
                <SmallButton disabled><RotateIcon />Rotate</SmallButton>
                <SmallButton disabled><FreeRotateIcon />Free Rotate</SmallButton>
                <SmallButton disabled><ResetIcon />Reset Rotation</SmallButton>
              </Stack>
            </GroupBody>
            <GroupTitle>Rotate</GroupTitle>
          </Group>
        </Ribbon>

        <Workspace>
          <Dock>
            <PaneTitle>
              <h2>Object Manager</h2>
              <PaneButton aria-label="Pin"><PinIcon /></PaneButton>
              <PaneButton aria-label="Close"><Close /></PaneButton>
            </PaneTitle>
            <TreePane>
              <TreeBox>
                <TreeList>
                  <TreeItem>
                    <Expander aria-label="Collapse Graph 1" />
                    <Elbow $root />
                    <Tick id="node-graph" defaultChecked />
                    <TreeLabel htmlFor="node-graph"><GraphTreeIcon /><span>Graph 1</span></TreeLabel>
                  </TreeItem>
                  {TREE.map(([name, Icon, selected]) => (
                    <TreeItem key={name} $child>
                      <Elbow />
                      <Tick id={`node-${name}`} defaultChecked />
                      <TreeLabel htmlFor={`node-${name}`} $selected={selected}><Icon /><span>{name}</span></TreeLabel>
                    </TreeItem>
                  ))}
                </TreeList>
                <ScrollTrack><ScrollThumb $len={43} $top={18} /></ScrollTrack>
                <Pointer width="14" height="24" viewBox="0 0 14 24" aria-hidden="true"><path d="M0 0l12 13-4 1 3 7-3 2-4-8-4 3z" fill="#fe0000" /></Pointer>
              </TreeBox>
            </TreePane>

            <PropPane>
              <PaneTitle $gold>
                <h2>Property Manager - Anion</h2>
                <PaneButton aria-label="Pin"><PinIcon /></PaneButton>
                <PaneButton aria-label="Close"><Close /></PaneButton>
              </PaneTitle>
              <PropTabs>
                <PropTab $w={51} $active>Plot</PropTab>
                <PropTab $w={69}>Data Limits</PropTab>
                <PropTab $w={48}>Labels</PropTab>
                <PropTab $w={51}>Symbol</PropTab>
                <PropTab $w={46}>Line</PropTab>
              </PropTabs>
              <PropGrid>
                <Section>
                  <SectionTitle><Collapse aria-label="Collapse Plot type" />Plot type</SectionTitle>
                  <PropRow>
                    <PropName htmlFor="plot-type">Plot type</PropName>
                    <PropValue><input id="plot-type" type="text" readOnly value="Piper Class Plot" /></PropValue>
                  </PropRow>
                </Section>
                <Section>
                  <SectionTitle><Collapse aria-label="Collapse Data" />Data</SectionTitle>
                  <SelectRow id="worksheet" name="Worksheet" value="Worksheet2 (Worksheet..." />
                  <PropRow>
                    <PropName htmlFor="data-rows" $selected>Data in rows</PropName>
                    <PropValue><RowTick id="data-rows" /></PropValue>
                  </PropRow>
                  <VariableRows>
                    {VARIABLES.map(([id, name, value]) => <SelectRow key={id} id={id} name={name} value={value} />)}
                    <Highlight />
                  </VariableRows>
                </Section>
                <Section>
                  <SectionTitle><Collapse aria-label="Collapse Plot Options" />Plot Options</SectionTitle>
                  <PropRow>
                    <PropName htmlFor="classes">Classes</PropName>
                    <PropValue><EditButton id="classes">Edit...</EditButton></PropValue>
                  </PropRow>
                </Section>
              </PropGrid>
              <Description>Data in rows</Description>
            </PropPane>
          </Dock>

          <Document>
            <DocTabs>
              <ArrowButton aria-label="Previous tab"><Ico size={9}><path d="M6.500 1v7l-4-3.500z" stroke="#666" /></Ico></ArrowButton>
              <DocTab $w={71} $gap={13} $active><span>Plot1 *</span><Close /></DocTab>
              <DocTab $w={88} $gap={0}>Worksheet2 *</DocTab>
              <ArrowButton $end aria-label="Next tab"><Ico size={9}><path d="M2.500 1v7l4-3.500z" stroke="#666" /></Ico></ArrowButton>
            </DocTabs>
            <CanvasFrame>
              <Canvas><PiperChart /></Canvas>
              <ScrollTrack><ScrollThumb $len={27} $top={297} /></ScrollTrack>
              <ScrollTrack $row><ScrollThumb $row /></ScrollTrack>
            </CanvasFrame>
            <PageTabs>
              <ArrowButton aria-label="Previous page"><Ico size={9}><path d="M6.500 1v7l-4-3.500z" stroke="#888" /></Ico></ArrowButton>
              <PageTab $w={57} $gap={13} $fill="#fff"><span>Page 1</span><Close /></PageTab>
              <PageTab $w={14} $gap={14} $fill="#cfe8f8" aria-label="Add page"><span>+</span></PageTab>
              <ArrowButton $end aria-label="Next page"><Ico size={9}><path d="M2.500 1v7l4-3.500z" stroke="#888" /></Ico></ArrowButton>
            </PageTabs>
          </Document>

          <SideStrip>
            <SideTab>
              <Ico><circle cx="8" cy="8" r="7" fill="#8ecb6e" stroke="#8a9a8a" /><circle cx="8" cy="8" r="5.500" stroke="#e8f5e0" /><ellipse cx="8" cy="5.500" rx="4" ry="2.500" fill="#dff3d2" /></Ico>
              <span>Worksheet Manager</span>
            </SideTab>
          </SideStrip>
        </Workspace>

        <StatusBar>
          <StatusText>Click=select; drag=block select; shift+click=multi-select; ctrl+click=cycle selection</StatusText>
          <StatusCell $w={138}>Graph 1 selected</StatusCell>
          <StatusCell $w={138}>x = 0.29 in, y = 7.77 in</StatusCell>
          <StatusCell />
          <Ico size={18}><path d="M17 4L4 17M17 9l-8 8M17 14l-3 3" stroke="#7695b6" /></Ico>
        </StatusBar>
      </Window>
    </>
  );
}
